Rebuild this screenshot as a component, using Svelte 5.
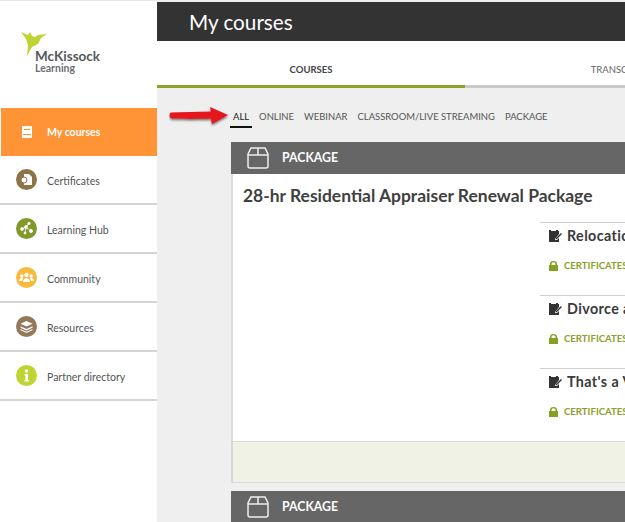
<script>
  const nav = [
    { label: "My courses", icon: "book", active: true },
    { label: "Certificates", icon: "cert", color: "#8f7348" },
    { label: "Learning Hub", icon: "hub", color: "#7f9a2b" },
    { label: "Community", icon: "people", color: "#f9b93c" },
    { label: "Resources", icon: "stack", color: "#94785a" },
    { label: "Partner directory", icon: "info", color: "#bdd433" }
  ];
  const filters = ["ALL", "ONLINE", "WEBINAR", "CLASSROOM/LIVE STREAMING", "PACKAGE"];
  const courses = ["Relocation", "Divorce and", "That's a Violation"];
</script>

{#snippet box()}
  <svg class="box" viewBox="0 0 22 22" width="22" height="22" fill="none" stroke="#eee" stroke-width="1.5">
    <path d="M4 1h14l3 6v12a2 2 0 0 1-2 2H3a2 2 0 0 1-2-2V7z" />
    <path d="M1 8h20M11 1v7" />
  </svg>
{/snippet}

{#snippet packageHead()}
  <div class="card-head">
    {@render box()}
    <span>PACKAGE</span>
  </div>
{/snippet}

<div class="page">
  <aside class="side">
    <div class="logo">
      <svg class="bird" viewBox="0 0 27 28" width="27" height="28">
        <path fill="#bdd433" d="M0 1L7 4L9 1L11 5L14 6L17 4L26 3L20 7L17 13L11 16L6 25L7 14L5 8z" />
      </svg>
      <div class="brand">McKissock</div>
      <div class="brand-sub">Learning</div>
    </div>
    <nav>
      {#each nav as item}
        <div class="nav-item" class:active={item.active}>
          {#if item.active}
            <svg class="book" viewBox="0 0 10 12" width="10" height="12">
              <path fill="#fff" fill-rule="evenodd" d="M1 0h8a1 1 0 0 1 1 1v10a1 1 0 0 1-1 1H1a1 1 0 0 1-1-1V1a1 1 0 0 1 1-1zM2 3v1h6V3zM1 8v1h8V8z" />
            </svg>
          {:else}
            <svg class="nav-icon" viewBox="0 0 21 21" width="21" height="21">
              <circle cx="10.5" cy="10.5" r="10.5" fill={item.color} />
              {#if item.icon === "cert"}
                <path fill="#fff" d="M8 5h5l3 3v8H8z" />
                <circle cx="8" cy="11" r="3" fill="#fff" stroke={item.color} />
              {:else if item.icon === "hub"}
                <g fill="#fff" stroke="#fff" stroke-width=".8">
                  <circle cx="6" cy="11" r="1.4" /><circle cx="10" cy="9" r="1.4" />
                  <circle cx="13" cy="5.5" r="1.2" /><circle cx="15" cy="13" r="1.6" /><circle cx="9" cy="15" r="1" />
                  <path d="M6 11l4-2 3-3.500M10 9l5 4M10 9l-1 6" />
                </g>
              {:else if item.icon === "people"}
                <g fill="#fff">
                  <circle cx="10.500" cy="8" r="2.200" /><circle cx="5.800" cy="9" r="1.700" /><circle cx="15.200" cy="9" r="1.700" />
                  <path d="M7 15c0-5 7-5 7 0zM3 14c0-3 3-4 4-3l-1 3zM18 14c0-3-3-4-4-3l1 3z" />
                </g>
              {:else if item.icon === "stack"}
                <g fill="#fff">
                  <path d="M10.500 5l6 2.800-6 2.800-6-2.800z" />
                  <path d="M4.500 10.300l6 2.800 6-2.800v1.400l-6 2.800-6-2.800z" />
                  <path d="M4.500 13l6 2.800 6-2.800v1.200l-6 2.800-6-2.800z" />
                </g>
              {:else}
                <g fill="#fff">
                  <circle cx="10.500" cy="6" r="1.700" />
                  <path d="M8.500 9h3.500v6h1v1.500H8.500V15h1v-4.500h-1z" />
                </g>
              {/if}
            </svg>
          {/if}
          <span>{item.label}</span>
        </div>
      {/each}
    </nav>
  </aside>

  <main class="main">
    <header class="title-bar"><h1>My courses</h1></header>
    <div class="tabs">
      <div class="tab on">COURSES</div>
      <div class="tab">TRANSCRIPT</div>
    </div>
    <div class="content">
      <svg class="arrow" viewBox="0 0 60 24" width="60" height="24">
        <defs>
          <filter id="sh" x="-10%" y="-30%" width="120%" height="170%">
            <feDropShadow dx="0" dy="1.500" stdDeviation="1.200" flood-color="#000" flood-opacity=".55" />
          </filter>
        </defs>
        <path fill="#e5141b" filter="url(#sh)" d="M2 8.500C15 8 30 8 42 7.500L41 3l18 8-16 9-1-5.500C30 15 15 15 3 14.500 0 14 0 9 2 8.500z" />
      </svg>
      <div class="filters">
        {#each filters as f, i}
          <span class="filter" class:current={i === 0}>{f}</span>
        {/each}
      </div>
      <section class="card">
        {@render packageHead()}
        <div class="card-body">
          <h2>28-hr Residential Appraiser Renewal Package</h2>
          <ul class="course-list">
            {#each courses as c}
              <li>
                <div class="course-name">
                  <svg viewBox="0 0 13 12" width="13" height="12">
                    <path fill="#333" d="M0 0h2v1h5v-1h2v1h1v3L6 9v1h2l2-2v4H0z" />
                    <path fill="#333" d="M7 8l5-5 1 1-5 5-1.500.5z" />
                  </svg>
                  {c}
                </div>
                <div class="cert">
                  <svg viewBox="0 0 9 10" width="9" height="10">
                    <path fill="#85a023" d="M1 4V3a3.500 3 0 0 1 7 0v1h1v6H0V4zm1.500 0h4V3a2 1.800 0 0 0-4 0z" />
                  </svg>
                  CERTIFICATES
                </div>
              </li>
            {/each}
          </ul>
        </div>
        <div class="card-foot"></div>
      </section>
      <section class="card second">
        {@render packageHead()}
      </section>
    </div>
  </main>
</div>

<style>
  :global(body) {
    margin: 0;
    background: #fff;
  }
  .page {
    display: flex;
    width: 625px;
    height: 522px;
    overflow: hidden;
    font-family: Lato, "Open Sans", sans-serif;
    color: #333;
  }
  .side {
    flex: 0 0 157px;
    background: #fff;
    border-top: 1px solid #e8e8e8;
    box-sizing: border-box;
  }
  .logo {
    height: 107px;
    box-sizing: border-box;
    padding: 30px 0 0 21px;
  }
  .bird {
    display: block;
    margin-bottom: -10px;
  }
  .brand {
    margin-left: 14px;
    font-size: 13.5px;
    line-height: 14px;
    font-weight: 700;
    color: #55585c;
  }
  .brand-sub {
    margin-left: 14px;
    font-size: 10.5px;
    line-height: 11px;
    font-weight: 700;
    color: #6b6e72;
  }
  .nav-item {
    display: flex;
    align-items: center;
    gap: 10px;
    height: 49px;
    box-sizing: border-box;
    padding-left: 16px;
    font-size: 10.5px;
    color: #555;
    border-bottom: 2px solid #d4d4d4;
  }
  .nav-item span {
    margin-top: 2px;
  }
  .nav-item.active {
    height: 48px;
    margin-left: 1px;
    padding-left: 21px;
    gap: 15px;
    background: #ff9437;
    border-bottom: 0;
    color: #fff;
    font-weight: 700;
  }
  .nav-item.active span {
    margin-top: 0;
  }
  .main {
    flex: 1 0 0;
    min-width: 0;
    display: flex;
    flex-direction: column;
    background: #efefef;
  }
  .title-bar {
    margin-top: 2px;
    height: 39px;
    background: #333;
    display: flex;
    align-items: center;
    padding-left: 32px;
    flex: none;
  }
  h1 {
    margin: 0;
    font-size: 20.7px;
    font-weight: 400;
    color: #fff;
  }
  .tabs {
    display: flex;
    width: 616px;
    background: #fff;
    flex: none;
  }
  .tab {
    flex: 0 0 308px;
    height: 32px;
    display: flex;
    align-items: center;
    justify-content: center;
    padding-top: 12px;
    font-size: 9.5px;
    color: #666;
    border-bottom: 3px solid #c9c9c9;
  }
  .tab.on {
    color: #444;
    font-weight: 700;
    border-bottom-color: #8ca02c;
  }
  .content {
    position: relative;
    padding: 0 0 0 74px;
    width: 616px;
    box-sizing: border-box;
  }
  .arrow {
    position: absolute;
    left: 12px;
    top: 16px;
  }
  .filters {
    display: flex;
    gap: 10px;
    padding: 22px 0 0 2px;
    height: 32px;
    font-size: 9.45px;
    line-height: 14px;
    color: #555;
  }
  .filter {
    height: 18px;
    white-space: nowrap;
  }
  .filter.current {
    color: #222;
    border-bottom: 2px solid #111;
    padding: 0 3px;
    margin: 0 -3px;
    box-sizing: border-box;
  }
  .card {
    width: 520px;
  }
  .card-head {
    display: flex;
    align-items: center;
    gap: 13px;
    height: 32px;
    padding-left: 16px;
    background: #666;
    color: #fff;
    font-size: 12.3px;
    font-weight: 700;
  }
  .card-head span {
    margin-bottom: 1px;
  }
  .card-body {
    height: 267px;
    box-sizing: border-box;
    padding: 12px 12px 0 10px;
    background: #fff;
    border-left: 2px solid #dcdcdc;
    overflow: hidden;
  }
  h2 {
    margin: 0;
    font-size: 17.45px;
    line-height: 20px;
    font-weight: 700;
    color: #404040;
  }
  .course-list {
    list-style: none;
    margin: 16px 0 0 297px;
    padding: 0;
  }
  li {
    height: 73px;
    box-sizing: border-box;
    border-top: 1px solid #d0d0d0;
    padding: 4px 0 0 9px;
  }
  .course-name {
    display: flex;
    align-items: center;
    gap: 5px;
    font-size: 14.3px;
    letter-spacing: 0.4px;
    line-height: 18px;
    font-weight: 700;
    color: #3a3a3a;
    white-space: nowrap;
  }
  .cert {
    display: flex;
    align-items: center;
    gap: 6px;
    margin-top: 15px;
    font-size: 9.6px;
    font-weight: 700;
    color: #8ca02c;
    white-space: nowrap;
  }
  .card-foot {
    height: 42px;
    background: #f1f2e6;
    border: 1px solid #d8d8d8;
    border-left-width: 2px;
    border-right: 0;
    box-sizing: border-box;
  }
  .second {
    margin-top: 8px;
  }
</style>
